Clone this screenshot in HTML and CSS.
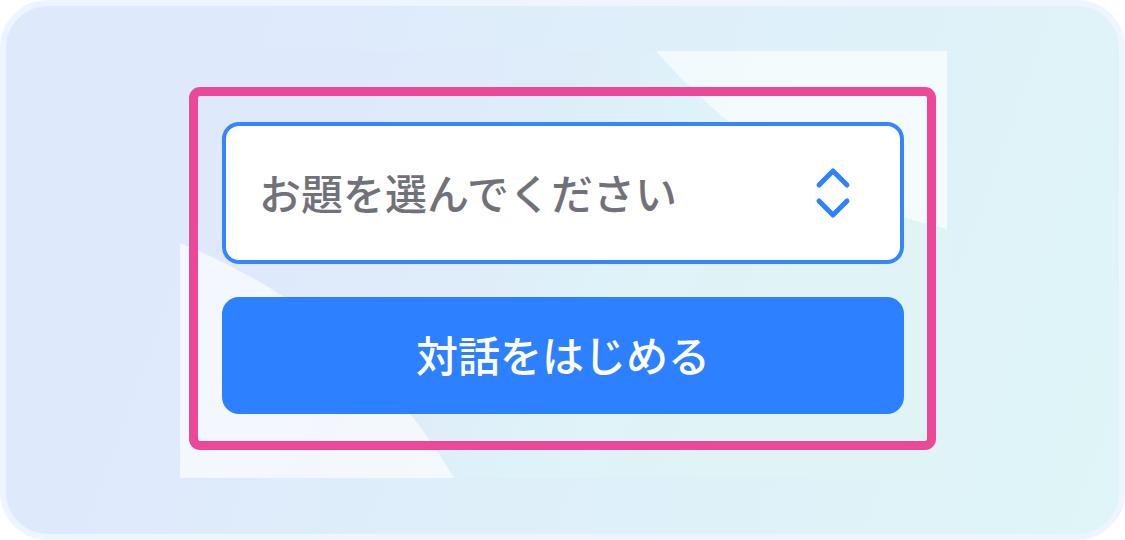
FILE: index.html
```html
<!DOCTYPE html>
<html lang="ja">
<head>
<meta charset="utf-8">
<meta name="viewport" content="width=device-width, initial-scale=1">
<title>対話をはじめる</title>
<link rel="stylesheet" href="styles.css">
</head>
<body>
<main class="card">
  <section class="panel">
    <svg class="panel-shapes" viewBox="0 0 767 427" preserveAspectRatio="none" aria-hidden="true">
      <path d="M476 0H767V178Q598 140 476 0Z"/>
      <path d="M0 192Q176 262 274 427H0Z"/>
    </svg>
    <form class="start-form">
      <div class="topic">
        <select class="topic-select" aria-label="お題">
          <option>お題を選んでください</option>
        </select>
        <svg class="topic-icon" viewBox="0 0 36 52" aria-hidden="true">
          <path d="M4 18L18 4L32 18M4 34L18 48L32 34"/>
        </svg>
      </div>
      <button class="start-button" type="button">対話をはじめる</button>
    </form>
  </section>
</main>
</body>
</html>
```
FILE: styles.css
```css
* {
  box-sizing: border-box;
}

body {
  margin: 0;
  background: #fff;
  font-family: "Noto Sans CJK JP", sans-serif;
}

.card {
  display: flex;
  min-height: 100vh;
  padding: 45px 172px 56px 174px;
  border: 6px solid #eef5ff;
  border-radius: 48px;
  background: linear-gradient(110deg, #dfe9fc 18%, #deeefa 45%, #dff5f7 100%);
}

.panel {
  position: relative;
  flex: 1;
  padding: 36px 11px 28px 9px;
  background: linear-gradient(115deg, #dfe9fc 20%, #dfedf9 43%, #def2f9 54%, #e0f4f6 75%);
}

.panel-shapes {
  position: absolute;
  inset: 0;
  width: 100%;
  height: 100%;
  fill: #fff;
  fill-opacity: 0.62;
}

.start-form {
  position: relative;
  display: flex;
  flex-direction: column;
  gap: 33px;
  padding: 26px 23px 27px 24px;
  border: 9px solid #ec4899;
  border-radius: 11px;
}

.topic {
  position: relative;
}

.topic-select {
  display: block;
  width: 100%;
  height: 142px;
  padding: 0 96px 4px 33px;
  border: 4px solid #3485ff;
  border-radius: 17px;
  background: #fff;
  color: #71717a;
  font: inherit;
  font-size: 42px;
  font-weight: 500;
  appearance: none;
}

.topic-icon {
  position: absolute;
  top: 45px;
  right: 53px;
  width: 36px;
  height: 52px;
  fill: none;
  stroke: #2e82ff;
  stroke-width: 5;
  stroke-linecap: round;
  stroke-linejoin: round;
  pointer-events: none;
}

.start-button {
  height: 117px;
  padding: 0 0 4px;
  border: 0;
  border-radius: 17px;
  background: #2d80ff;
  color: #fff;
  font: inherit;
  font-size: 42px;
  font-weight: 500;
}
```
